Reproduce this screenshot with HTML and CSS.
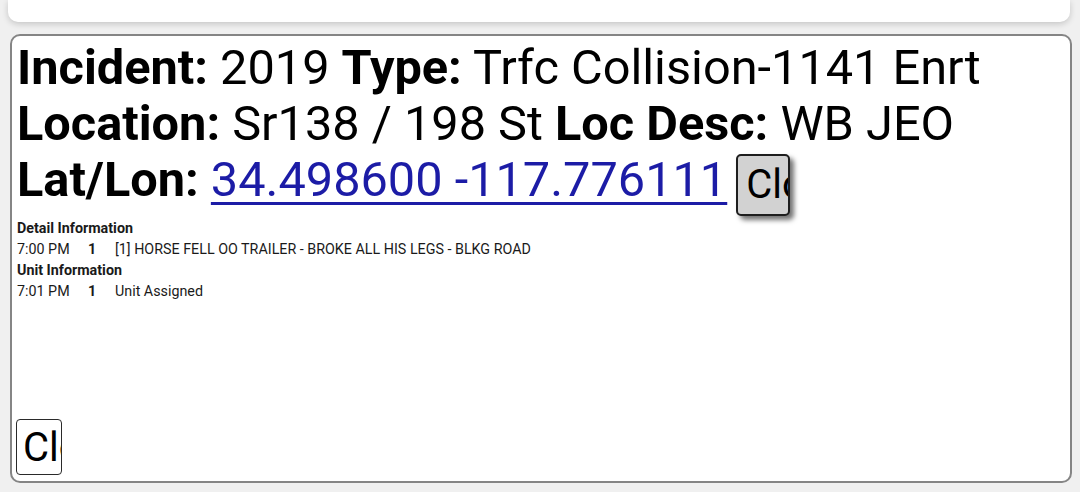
FILE: index.html
```html
<!DOCTYPE html>
<html>
<head>
<meta charset="utf-8">
<link rel="stylesheet" href="styles.css">
</head>
<body>
<div class="topcard"></div>
<div class="card">
  <div class="head">
    <div><b>Incident:</b> 2019 <b>Type:</b> Trfc Collision-1141 Enrt</div>
    <div><b>Location:</b> Sr138 / 198 St <b>Loc Desc:</b> WB JEO</div>
    <div class="latline"><b>Lat/Lon:</b> <a href="#" class="coords">34.498600 -117.776111</a> <button class="btn btn-map">Close</button></div>
  </div>
  <div class="info">
    <div class="sect">Detail Information</div>
    <div class="row"><span>7:00 PM</span><b>1</b><span>[1] HORSE FELL OO TRAILER - BROKE ALL HIS LEGS - BLKG ROAD</span></div>
    <div class="sect">Unit Information</div>
    <div class="row"><span>7:01 PM</span><b>1</b><span>Unit Assigned</span></div>
  </div>
  <div class="foot"><button class="btn btn-close">Close</button></div>
</div>
</body>
</html>
```
FILE: styles.css
```css
html, body {
  margin: 0;
  padding: 0;
  background: #f0f0f0;
  font-family: Roboto, "Liberation Sans", sans-serif;
  color: #000;
}
.topcard {
  margin: 0 10px 0 8px;
  height: 22px;
  background: #fff;
  border-radius: 0 0 10px 10px;
  box-shadow: 0 2px 6px rgba(0,0,0,0.18);
}
.card {
  margin: 12px 8px 0 10px;
  background: #fff;
  border: 2px solid #858585;
  border-radius: 10px;
  box-sizing: border-box;
  height: 449px;
  padding: 4px 6px 6px 5px;
  display: flex;
  flex-direction: column;
}
.head {
  font-size: 48.7px;
  line-height: 56px;
}
.head b { font-weight: 700; }
.coords {
  color: #1c1ca6;
  text-decoration: underline;
  text-decoration-thickness: 3px;
  text-underline-offset: 6px;
}
.btn {
  font-family: Roboto, "Liberation Sans", sans-serif;
  overflow: hidden;
  white-space: nowrap;
  text-align: left;
  color: #000;
  box-sizing: border-box;
}
.btn-map {
  width: 54px;
  height: 62px;
  font-size: 40px;
  padding: 0 0 0 8px;
  background: #d2d2d2;
  border: 2px solid #1e1e1e;
  border-radius: 5px;
  box-shadow: 4px 4px 5px rgba(0,0,0,0.55);
  vertical-align: -2px;
  margin-left: -3px;
}
.info {
  margin-top: 2px;
  font-size: 14.3px;
  line-height: 21px;
  color: #1a1a1a;
}
.sect { font-weight: 700; }
.row {
  display: grid;
  grid-template-columns: 71px 27px auto;
}
.foot {
  margin-top: auto;
}
.btn-close {
  width: 46px;
  height: 56px;
  font-size: 40px;
  padding: 0 0 0 6px;
  background: #fff;
  border: 1.5px solid #2a2a2a;
  border-radius: 4px;
  margin-left: -1px;
}
```
